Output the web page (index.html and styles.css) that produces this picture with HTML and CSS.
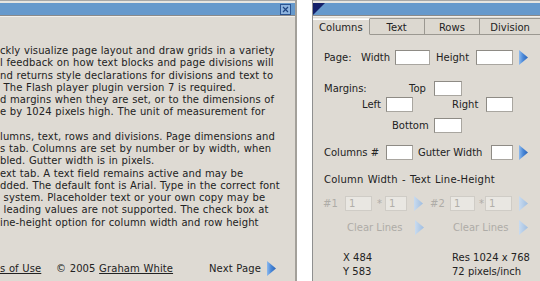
FILE: index.html
```html
<!DOCTYPE html>
<html>
<head>
<meta charset="utf-8">
<link rel="stylesheet" href="styles.css">
</head>
<body>
<svg width="0" height="0" class="defs">
  <defs>
    <linearGradient id="arrowOn" x1="0" y1="0" x2="1" y2="0">
      <stop offset="0" stop-color="#8dbaee"/>
      <stop offset="0.45" stop-color="#4a88d8"/>
      <stop offset="1" stop-color="#2a64b8"/>
    </linearGradient>
    <linearGradient id="arrowOff" x1="0" y1="0" x2="1" y2="0">
      <stop offset="0" stop-color="#c9dbef"/>
      <stop offset="1" stop-color="#9fbde0"/>
    </linearGradient>
  </defs>
</svg>
<div class="page">
  <section class="help">
    <div class="titlebar">
      <div class="bar">
        <span class="close">
          <svg width="11" height="11" viewBox="0 0 11 11"><rect x="0.5" y="0.5" width="10" height="10" fill="#8db3de" stroke="#2c5592"/><path d="M3 3 L8 8 M8 3 L3 8" stroke="#1f4582" stroke-width="1.2"/></svg>
        </span>
      </div>
    </div>
    <div class="help-body">
      <p class="ln">ckly visualize page layout and draw grids in a variety</p>
      <p class="ln">l feedback on how text blocks and page divisions will</p>
      <p class="ln">nd returns style declarations for divisions and text to</p>
      <p class="ln"> The Flash player plugin version 7 is required.</p>
      <p class="ln">d margins when they are set, or to the dimensions of</p>
      <p class="ln">e by 1024 pixels high. The unit of measurement for</p>
      <p class="ln"> </p>
      <p class="ln">lumns, text, rows and divisions. Page dimensions and</p>
      <p class="ln">s tab. Columns are set by number or by width, when</p>
      <p class="ln">bled. Gutter width is in pixels.</p>
      <p class="ln">ext tab. A text field remains active and may be</p>
      <p class="ln">dded. The default font is Arial. Type in the correct font</p>
      <p class="ln"> system. Placeholder text or your own copy may be</p>
      <p class="ln"> leading values are not supported. The check box at</p>
      <p class="ln">ine-height option for column width and row height</p>
    </div>
    <div class="footer">
      <a class="lnk terms">s of Use</a>
      <span class="copy">© 2005 <a class="lnk">Graham White</a></span>
      <span class="next">Next Page</span>
      <svg class="arrow" width="9" height="15" viewBox="0 0 9 15"><polygon points="0,0 9,7.5 0,15" fill="url(#arrowOn)"/></svg>
    </div>
  </section>

  <section class="tool">
    <div class="titlebar">
      <div class="bar">
        <svg class="corner" width="12" height="12" viewBox="0 0 12 12"><polygon points="0,0 12,0 0,12" fill="#14206a"/></svg>
      </div>
    </div>
    <div class="tabs">
      <span class="tab active">Columns</span>
      <span class="tab t-text">Text</span>
      <span class="tab t-rows">Rows</span>
      <span class="tab t-div">Division</span>
    </div>
    <div class="tool-body">
      <div class="row r1">
        <span class="lb w37">Page:</span>
        <span class="lb w34">Width</span>
        <span class="in w35"></span>
        <span class="lb w40 ml6">Height</span>
        <span class="in w37"></span>
        <svg class="arrow ml6" width="9" height="15" viewBox="0 0 9 15"><polygon points="0,0 9,7.5 0,15" fill="url(#arrowOn)"/></svg>
      </div>
      <div class="row r2">
        <span class="lb w85">Margins:</span>
        <span class="lb w25">Top</span>
        <span class="in w28"></span>
      </div>
      <div class="row r3">
        <span class="lb w24">Left</span>
        <span class="in w27"></span>
        <span class="lb w34 ml39">Right</span>
        <span class="in w27"></span>
      </div>
      <div class="row r4">
        <span class="lb w42">Bottom</span>
        <span class="in w28"></span>
      </div>
      <div class="row r5">
        <span class="lb w62">Columns #</span>
        <span class="in w27"></span>
        <span class="lb w73 ml5">Gutter Width</span>
        <span class="in w22"></span>
        <svg class="arrow ml6" width="9" height="15" viewBox="0 0 9 15"><polygon points="0,0 9,7.5 0,15" fill="url(#arrowOn)"/></svg>
      </div>
      <div class="row r6">Column Width - Text Line-Height</div>
      <div class="row r7 off">
        <span class="lb w22">#1</span>
        <span class="in dis w27">1</span>
        <span class="lb w8 ml5">*</span>
        <span class="in dis w22">1</span>
        <svg class="arrow ml7" width="9" height="15" viewBox="0 0 9 15"><polygon points="0,0 9,7.5 0,15" fill="url(#arrowOff)"/></svg>
        <span class="lb w20 ml7">#2</span>
        <span class="in dis w25">1</span>
        <span class="lb w6 ml4">*</span>
        <span class="in dis w27">1</span>
        <svg class="arrow ml7" width="9" height="15" viewBox="0 0 9 15"><polygon points="0,0 9,7.5 0,15" fill="url(#arrowOff)"/></svg>
      </div>
      <div class="row r8 off">
        <span class="lb w68">Clear Lines</span>
        <svg class="arrow" width="9" height="15" viewBox="0 0 9 15"><polygon points="0,0 9,7.5 0,15" fill="url(#arrowOff)"/></svg>
        <span class="lb w66 ml29">Clear Lines</span>
        <svg class="arrow" width="9" height="15" viewBox="0 0 9 15"><polygon points="0,0 9,7.5 0,15" fill="url(#arrowOff)"/></svg>
      </div>
      <div class="row r9">
        <span class="lb w109">X 484</span>
        <span class="lb">Res 1024 x 768</span>
      </div>
      <div class="row r10">
        <span class="lb w109">Y 583</span>
        <span class="lb">72 pixels/inch</span>
      </div>
    </div>
  </section>
</div>
</body>
</html>
```

FILE: styles.css
```css
* { box-sizing: border-box; margin: 0; padding: 0; }
html, body { width: 540px; height: 281px; overflow: hidden; background: #ffffff; }
body { font-family: "DejaVu Sans", Verdana, sans-serif; font-size: 10px; color: #222; }
.defs { position: absolute; width: 0; height: 0; }

.page { display: flex; height: 281px; gap: 15px; }

/* title bars */
.titlebar { height: 17px; border-top: 1px solid #a7a7a7; padding-top: 2px; background: #e7e5e0; border-bottom: 1px solid #f2f0ec; }
.bar { height: 13px; background: #6699cc; border-bottom: 1px solid #8a8a8a; display: flex; }

/* left help panel */
.help { width: 297px; height: 281px; flex: none; background: #dedad3; border-right: 2px solid #a3a09a; display: flex; flex-direction: column; overflow: hidden; letter-spacing: 0.1px; word-spacing: 0.3px; }
.help .bar { justify-content: flex-end; }
.close { display: block; width: 11px; height: 11px; margin: 1px 4px 0 0; }
.close svg { display: block; }

.help-body { padding-top: 28px; }
.ln { white-space: pre; line-height: 12.25px; height: 12.25px; }

.footer { margin-top: auto; margin-bottom: 5px; height: 16px; display: flex; align-items: center; }
.lnk { text-decoration: underline; color: #222; }
.terms { width: 56px; }
.copy { width: 153px; }
.next { width: 58px; }
.arrow { display: block; flex: none; }

/* right tool panel */
.tool { width: 228px; height: 281px; flex: none; background: #dedad3; border-left: 1px solid #8f8f8f; display: flex; flex-direction: column; overflow: hidden; }
.corner { display: block; }

.tabs { display: flex; height: 17px; margin-top: 1px; }
.tab { display: block; text-align: center; line-height: 17px; border-top: 1px solid #9b9891; border-right: 1px solid #9b9891; border-bottom: 1px solid #9b9891; background: #dcd8d0; }
.tab.active { width: 57px; border-bottom-color: #dedad3; background: #dedad3; border-top-color: #f4f2ee; box-shadow: inset 0 1px 0 #ffffff; }
.t-text { width: 55px; }
.t-rows { width: 56px; }
.t-div { width: 60px; border-right: none; }

.tool-body { padding-left: 11px; }
.row { display: flex; align-items: center; white-space: nowrap; }
.lb { display: block; flex: none; }
.in { display: block; flex: none; height: 15px; background: #ffffff; border: 1px solid #a9a6a0; border-top-color: #8e8b85; border-left-color: #8e8b85; }
.in.dis { background: #e9e7e2; border-color: #cfccc6; color: #b0aea8; padding-left: 3px; line-height: 13px; }
.off { color: #aeaca7; }

.r1 { margin-top: 15px; height: 15px; }
.r2 { margin-top: 16px; height: 15px; }
.r3 { margin-top: 1px; height: 15px; padding-left: 38px; }
.r4 { margin-top: 6px; height: 15px; padding-left: 68px; }
.r5 { margin-top: 12px; height: 15px; }
.r6 { margin-top: 13px; height: 12px; letter-spacing: 0.2px; word-spacing: 0.8px; }
.r7 { margin-top: 11px; height: 15px; margin-left: -1px; }
.r8 { margin-top: 9px; height: 15px; padding-left: 23px; }
.r9 { margin-top: 16px; height: 12px; padding-left: 19px; }
.r10 { margin-top: 2px; height: 12px; padding-left: 19px; }

.w6 { width: 6px; } .w8 { width: 8px; } .w20 { width: 20px; } .w22 { width: 22px; }
.w24 { width: 24px; } .w25 { width: 25px; } .w27 { width: 27px; } .w28 { width: 28px; }
.w34 { width: 34px; } .w35 { width: 35px; } .w37 { width: 37px; } .w40 { width: 40px; }
.w42 { width: 42px; } .w62 { width: 62px; } .w66 { width: 66px; } .w68 { width: 68px; }
.w73 { width: 73px; } .w85 { width: 85px; } .w109 { width: 109px; }
.ml4 { margin-left: 4px; } .ml5 { margin-left: 5px; } .ml6 { margin-left: 6px; }
.ml7 { margin-left: 7px; } .ml29 { margin-left: 29px; } .ml39 { margin-left: 39px; }
```
